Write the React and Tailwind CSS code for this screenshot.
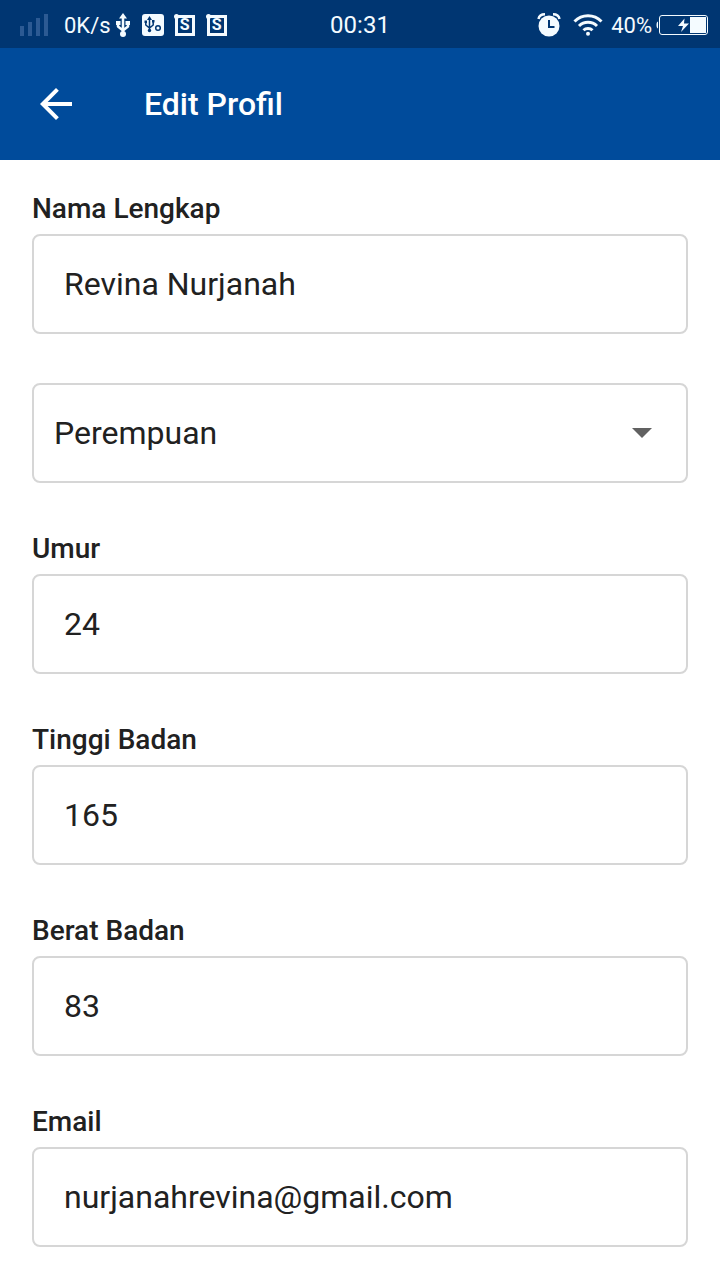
import { useState } from 'react'

const inputStyles = 'block w-full h-[100px] border-2 border-[#d6d6d6] rounded-lg bg-white text-[32px] text-[#212121] outline-none focus:border-[#004b9b]'

const textFields = [
  { id: 'age', label: 'Umur', type: 'text', inputMode: 'numeric' },
  { id: 'height', label: 'Tinggi Badan', type: 'text', inputMode: 'numeric' },
  { id: 'weight', label: 'Berat Badan', type: 'text', inputMode: 'numeric' },
  { id: 'email', label: 'Email', type: 'email', inputMode: 'email' },
]

export default function App() {
  const [form, setForm] = useState({
    name: 'Revina Nurjanah',
    gender: 'Perempuan',
    age: '24',
    height: '165',
    weight: '83',
    email: 'nurjanahrevina@gmail.com',
  })

  const handleChange = (e) => {
    const { name, value } = e.target
    setForm(prev => ({ ...prev, [name]: value }))
  }

  return (
    <div className="min-h-screen bg-white font-[Roboto,sans-serif] text-[#212121]">
      <StatusBar />

      <header className="flex items-center h-28 px-8 gap-16 bg-[#004b9b] text-white">
        <button type="button" aria-label="Kembali" className="w-12 h-12 flex items-center justify-center">
          <svg className="w-12 h-12" viewBox="0 0 24 24" fill="currentColor">
            <path d="M20 11H7.83l5.59-5.59L12 4l-8 8 8 8 1.41-1.41L7.83 13H20v-2z" />
          </svg>
        </button>
        <h1 className="text-[32px] font-medium">Edit Profil</h1>
      </header>

      <form className="flex flex-col gap-[49px] px-8 pt-8 pb-[33px]" onSubmit={e => e.preventDefault()}>
        <TextField id="name" label="Nama Lengkap" type="text" value={form.name} onChange={handleChange} />

        <div className="relative">
          <select
            name="gender"
            aria-label="Jenis Kelamin"
            value={form.gender}
            onChange={handleChange}
            className={`${inputStyles} appearance-none pl-5 pr-16`}
          >
            <option>Perempuan</option>
            <option>Laki-laki</option>
          </select>
          {/* Dropdown arrow */}
          <svg className="absolute right-9 top-[45px] w-5 h-[10px] text-[#616161] pointer-events-none" viewBox="0 0 20 10" fill="currentColor">
            <path d="M0 0h20L10 10z" />
          </svg>
        </div>

        {textFields.map(field => (
          <TextField key={field.id} {...field} value={form[field.id]} onChange={handleChange} />
        ))}
      </form>
    </div>
  )
}


function TextField({ id, label, type, inputMode, value, onChange }) {
  return (
    <div>
      <label htmlFor={id} className="block mb-2 text-[28px] leading-[34px] font-medium">{label}</label>
      <input
        id={id}
        name={id}
        type={type}
        inputMode={inputMode}
        value={value}
        onChange={onChange}
        className={`${inputStyles} px-[30px]`}
      />
    </div>
  )
}


function StatusBar() {
  return (
    <div className="grid grid-cols-[1fr_auto_1fr] items-center h-12 px-3 pt-0.5 bg-[#003672] text-[#f4fbff]">
      <div className="flex items-center pl-2">
        {/* No signal */}
        <svg className="w-7 h-6 text-[#2c5a93]" viewBox="0 0 28 24" fill="currentColor">
          <path d="M0 13h4v10H0zM8 9h4v14H8zM16 5h4v18h-4zM24 1h4v22h-4z" />
        </svg>
        <span className="ml-4 text-[22px]">0K/s</span>
        <UsbIcon className="ml-1 w-4 h-6" />
        <svg className="ml-[11px] w-[22px] h-[22px]" viewBox="0 0 22 22" fill="none">
          <rect width="22" height="22" rx="3" fill="currentColor" />
          <g stroke="#003672" strokeWidth="1.5">
            <path d="M7.500 4v12M3.800 8v3l3.700 3 3.700-3V7" />
            <circle cx="16" cy="14" r="2.300" />
          </g>
          <path d="M7.500 2l2.500 4H5zM2.500 6.500H5V9H2.500zM10 6h2.500v2.500H10z" fill="#003672" />
          <circle cx="7.500" cy="16.500" r="1.700" fill="#003672" />
        </svg>
        <ScreenBadge className="ml-[11px]" />
        <ScreenBadge className="ml-3" />
      </div>

      <span className="text-[24px]">00:31</span>

      <div className="flex items-center justify-end">
        {/* Alarm */}
        <svg className="w-6 h-6" viewBox="0 0 24 24" fill="none">
          <circle cx="12" cy="13" r="10.500" fill="currentColor" />
          <path d="M1.500 6C2 3 4.500 1.300 8 1.300M22.500 6c-.5-3-3-4.700-6.500-4.700" stroke="currentColor" strokeWidth="2.500" />
          <path d="M12 7v7h5.500" stroke="#003672" strokeWidth="2" />
        </svg>
        {/* Wifi */}
        <svg className="ml-3 w-[30px] h-[22px]" viewBox="0 0 30 22" fill="none" stroke="currentColor" strokeWidth="3">
          <path d="M1.500 7.500C9-.2 21-.2 28.500 7.500M6 12c5-5 13-5 18 0M10.500 16.300c2.500-2.500 6.500-2.500 9 0" />
          <circle cx="15" cy="19.800" r="2" fill="currentColor" stroke="none" />
        </svg>
        <span className="ml-2 text-[22px]">40%</span>
        {/* Battery, charging */}
        <svg className="ml-1 w-[52px] h-5" viewBox="0 0 52 20" fill="none">
          <path d="M2 6.500C.8 7 .5 8 .5 10s.3 3 1.500 3.500z" fill="currentColor" />
          <rect x="3.500" y=".5" width="48" height="19" rx="2.500" stroke="currentColor" />
          <path d="M34 2h16v16H34z" fill="currentColor" />
          <path d="M28.500 3.500l-6.500 7.500h5l-2 6 8-8.500h-5z" fill="currentColor" />
        </svg>
      </div>
    </div>
  )
}


function UsbIcon({ className }) {
  return (
    <svg className={className} viewBox="0 0 16 24" fill="none">
      <path d="M8 4v17M3 10v3.500l5 4 5-4V10" stroke="currentColor" strokeWidth="2.500" strokeLinejoin="round" />
      <path d="M8 0l4 5.500H4zM1 8h4.500v4H1zM10.500 8H15v4h-4.500z" fill="currentColor" />
      <circle cx="8" cy="21" r="3" fill="currentColor" />
    </svg>
  )
}


function ScreenBadge({ className }) {
  return (
    <span className={`relative flex items-center justify-center w-5 h-[21px] border-[3px] border-current text-base leading-none font-bold ${className}`}>
      <span className="absolute -left-1 -top-1 w-[5px] h-[5px] rounded-full bg-current" />
      S
    </span>
  )
}
